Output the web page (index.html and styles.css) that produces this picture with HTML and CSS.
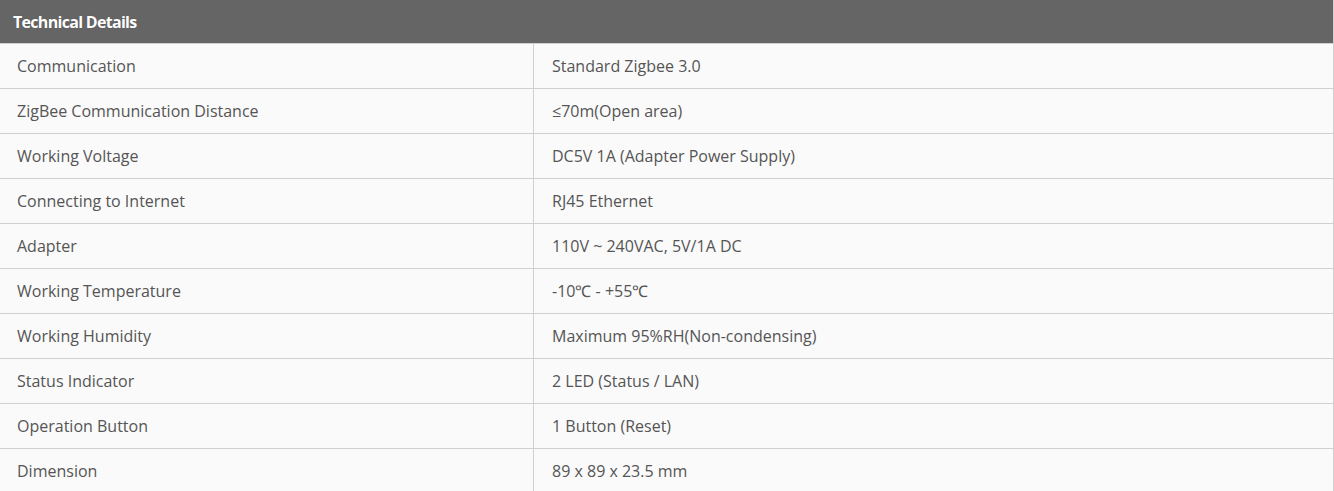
FILE: index.html
```html
<!DOCTYPE html>
<html>
<head>
<meta charset="utf-8">
<link rel="stylesheet" href="styles.css">
</head>
<body>
<div class="specs">
  <div class="specs-head">Technical Details</div>
  <div class="specs-row"><div class="k">Communication</div><div class="v">Standard Zigbee 3.0</div></div>
  <div class="specs-row"><div class="k">ZigBee Communication Distance</div><div class="v">≤70m(Open area)</div></div>
  <div class="specs-row"><div class="k">Working Voltage</div><div class="v">DC5V 1A (Adapter Power Supply)</div></div>
  <div class="specs-row"><div class="k">Connecting to Internet</div><div class="v">RJ45 Ethernet</div></div>
  <div class="specs-row"><div class="k">Adapter</div><div class="v">110V ~ 240VAC, 5V/1A DC</div></div>
  <div class="specs-row"><div class="k">Working Temperature</div><div class="v">-10℃ - +55℃</div></div>
  <div class="specs-row"><div class="k">Working Humidity</div><div class="v">Maximum 95%RH(Non-condensing)</div></div>
  <div class="specs-row"><div class="k">Status Indicator</div><div class="v">2 LED (Status / LAN)</div></div>
  <div class="specs-row"><div class="k">Operation Button</div><div class="v">1 Button (Reset)</div></div>
  <div class="specs-row"><div class="k">Dimension</div><div class="v">89 x 89 x 23.5 mm</div></div>
</div>
</body>
</html>
```
FILE: styles.css
```css
html, body {
  margin: 0;
  padding: 0;
  background: #fafafa;
}
body {
  font-family: "Open Sans", "Liberation Sans", sans-serif;
  color: #555555;
  overflow: hidden;
}
.specs {
  width: 1334px;
  border-right: 1px solid #d0d0d0;
  box-sizing: border-box;
}
.specs-head {
  height: 43px;
  background: #656565;
  color: #ffffff;
  font-weight: 700;
  font-size: 16px;
  letter-spacing: -0.7px;
  display: flex;
  align-items: center;
  padding-left: 13px;
  border-bottom: 1px solid #d0d0d0;
  text-shadow: 0 0 1px rgba(0,0,0,0.3);
}
.specs-row {
  display: grid;
  grid-template-columns: 534px 1fr;
  height: 44px;
  border-bottom: 1px solid #d0d0d0;
  font-size: 16px;
}
.specs-row .k,
.specs-row .v {
  display: flex;
  align-items: center;
}
.specs-row .k {
  padding-left: 17px;
  border-right: 1px solid #d0d0d0;
}
.specs-row .v {
  padding-left: 18px;
}
```
